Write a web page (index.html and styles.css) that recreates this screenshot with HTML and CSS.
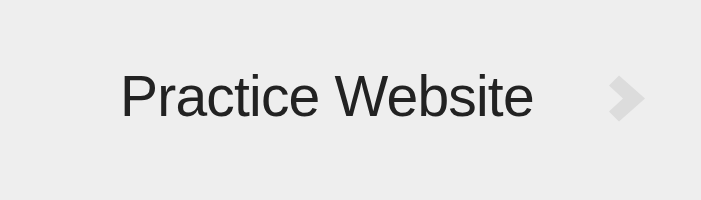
FILE: index.html
```html
<!DOCTYPE html>
<html lang="en">
<head>
    <meta charset="UTF-8">
    <title>Practice Website</title>
    <link rel="stylesheet" href="styles.css">
</head>
<body>
    <a class="banner" href="#">
        <span class="title">Practice Website</span>
        <svg class="chevron" width="40" height="50" viewBox="0 0 40 50" aria-hidden="true">
            <polygon points="2,13.5 12,3.5 38,26.5 12,49.5 2,39.5 16,26.5" />
        </svg>
    </a>
</body>
</html>
```

FILE: styles.css
```css
body {
    margin: 0;
    background-color: #eeeeee;
}
.banner {
    display: flex;
    align-items: center;
    height: 200px;
    padding: 0 54px 7px 120px;
    box-sizing: border-box;
    text-decoration: none;
}
.title {
    font-family: "Liberation Sans", Arial, sans-serif;
    font-size: 57px;
    line-height: 57px;
    letter-spacing: -0.8px;
    color: #222;
}
.chevron {
    margin-left: auto;
    fill: #dcdcdc;
}
```
